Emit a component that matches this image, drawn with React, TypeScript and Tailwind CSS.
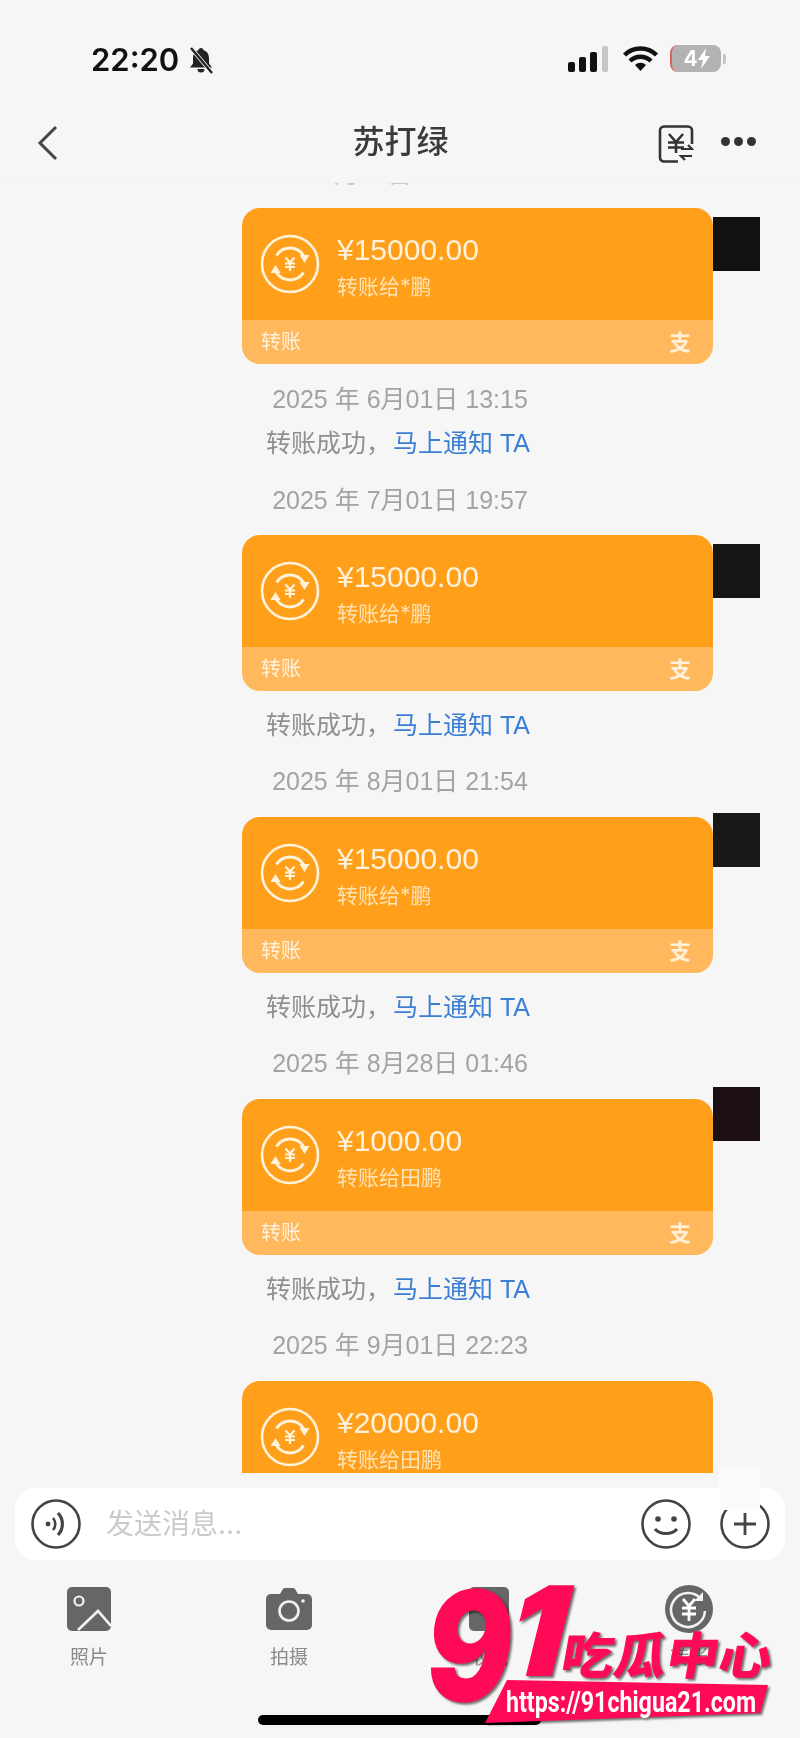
import React from "react";

const cjk = "font-['Inter','Noto_Sans_CJK_SC',sans-serif]";

function TransferGlyph() {
  return (
    <svg width="60" height="60" viewBox="0 0 60 60" fill="none" stroke="#fff3dc" className="shrink-0">
      <circle cx="30" cy="30" r="28" strokeWidth="2.6" />
      <path d="M16.500 21.500a16 16 0 0 1 27 0" strokeWidth="3" />
      <path d="M43.500 38.500a16 16 0 0 1-27 0" strokeWidth="3" />
      <path d="M39.500 21h10l-5 8z" fill="#fff3dc" strokeWidth="0" />
      <path d="M20.500 39h-10l5-8z" fill="#fff3dc" strokeWidth="0" />
      <path d="M25.500 23.500l4.500 5 4.500-5M25 29.500h10M25 33h10M30 29v8" strokeWidth="2.200" />
    </svg>
  );
}

function Card({ amount, to, square }: { amount: string; to: string; square?: string }) {
  return (
    <div className="relative ml-[242px] w-[471px] shrink-0">
      <div className="overflow-hidden rounded-[18px]">
        <div className="flex h-[112px] items-center gap-[17px] bg-[#ff9f1a] pl-[18px]">
          <TransferGlyph />
          <div className="flex flex-col pt-[6px]">
            <span className="font-['Liberation_Sans',sans-serif] text-[30px] leading-[34px] text-[#fff2dc]">{amount}</span>
            <span className={`${cjk} mt-[6px] text-[21px] leading-[28px] text-[#ffe2b4]`}>{to}</span>
          </div>
        </div>
        <div className="flex h-[44px] items-center justify-between bg-[#ffb85c] pl-[19px] pr-[22px]">
          <span className={`${cjk} text-[20px] text-[#fff1dc]`}>转账</span>
          <span className={`${cjk} text-[22px] font-semibold text-[#fff1dc]`}>支</span>
        </div>
      </div>
      {square && <div className={`absolute left-[471px] top-[9px] h-[54px] w-[47px] ${square}`} />}
    </div>
  );
}

function DateLine({ text, mt }: { text: string; mt: string }) {
  return (
    <div className={`${mt} flex h-[36px] shrink-0 items-center justify-center pt-[2px] font-['Liberation_Sans','Noto_Sans_CJK_SC',sans-serif] text-[25px] text-[#a3a3a3]`}>
      {text}
    </div>
  );
}

function Success({ mt }: { mt: string }) {
  return (
    <div className={`${mt} flex h-[36px] shrink-0 items-center justify-center pr-[4px] pt-[2px] font-['Liberation_Sans','Noto_Sans_CJK_SC',sans-serif] text-[25px] text-[#8f8f8f]`}>
      <span className="mr-[2px]">转账成功，</span>
      <span className="text-[#3b7fd4]">马上通知 TA</span>
    </div>
  );
}

function Tool({ label, children }: { label: string; children: React.ReactNode }) {
  return (
    <div className="flex flex-col items-center">
      <div className="flex h-[50px] items-center justify-center">{children}</div>
      <span className={`${cjk} mt-[10px] text-[19px] leading-[28px] text-[#8a8a8a]`}>{label}</span>
    </div>
  );
}

function Logo() {
  return (
    <svg
      width="360"
      height="160"
      viewBox="0 0 360 160"
      className="absolute left-[425px] top-[1578px] drop-shadow-[2px_2px_1px_rgba(0,0,0,0.55)]"
    >
      <g transform="skewX(-6)">
        <text x="10" y="122" fontFamily="Inter" fontWeight="800" fontSize="150" fill="#ff0a57" stroke="#ff0a57" strokeWidth="2" textLength="86" lengthAdjust="spacingAndGlyphs">
          9
        </text>
      </g>
      <g transform="skewX(-14)">
        <text x="101" y="97" fontFamily="Inter" fontWeight="900" fontSize="122" fill="#ff0a57" stroke="#ff0a57" strokeWidth="2" textLength="55" lengthAdjust="spacingAndGlyphs">
          1
        </text>
      </g>
      <text
        x="0"
        y="0"
        transform="translate(134 96) skewX(-10)"
        fontFamily="Noto Sans CJK SC"
        fontWeight="900"
        fontSize="50"
        fill="#ff0a57"
        textLength="210"
        lengthAdjust="spacingAndGlyphs"
      >
        吃瓜中心
      </text>
      <polygon points="82,102 343,107 335,135 60,145" fill="#ff0a57" />
      <text x="81" y="134" fontFamily="Roboto" fontWeight="700" fontSize="29" fill="#ffffff" textLength="250" lengthAdjust="spacingAndGlyphs">
        https://91chigua21.com
      </text>
    </svg>
  );
}

export default function App() {
  return (
    <div className="relative flex h-[1738px] w-[800px] flex-col overflow-hidden bg-[#f6f6f6] blur-[0.5px]">
      {/* status bar */}
      <div className="flex h-[100px] shrink-0 items-start justify-between pl-[91px] pr-[74px] pt-[42px]">
        <div className="flex items-center gap-[9px]">
          <span className="font-['Inter',sans-serif] text-[31px] font-semibold leading-[36px] text-[#111]">22:20</span>
          <svg width="26" height="27" viewBox="0 0 26 27" fill="#222">
            <path d="M13 1c1.500 0 2.400 1 2.600 2.200C19.500 4.400 21 7.500 21 11.500v5l3 4H2l3-4v-5c0-4 1.500-7.100 5.400-8.300C10.600 2 11.500 1 13 1z" />
            <path d="M9.500 22h7a3.500 3.500 0 0 1-7 0z" />
            <path d="M3 1l21 25" stroke="#f6f6f6" strokeWidth="4" />
            <path d="M3 1l21 25" stroke="#222" strokeWidth="2.400" />
          </svg>
        </div>
        <div className="flex items-center pt-[3px]">
          <svg width="41" height="26" viewBox="0 0 41 26">
            <rect x="0" y="16" width="7" height="10" rx="2" fill="#111" />
            <rect x="11" y="11" width="7" height="15" rx="2" fill="#111" />
            <rect x="22" y="6" width="7" height="20" rx="2" fill="#111" />
            <rect x="34" y="0" width="6" height="26" rx="2" fill="#c6c6c6" />
          </svg>
          <svg width="37" height="26" viewBox="0 0 37 26" fill="none" stroke="#111" strokeWidth="4.500" className="ml-[13px]">
            <path d="M2.500 9a23 23 0 0 1 32 0" />
            <path d="M8 15a15 15 0 0 1 21 0" />
            <path d="M18.500 25l-5.500-6a8 8 0 0 1 11 0z" fill="#111" stroke="none" />
          </svg>
          <div className="ml-[11px] flex items-center gap-[2px]">
            <div className="flex h-[27px] w-[51px] items-center justify-center rounded-[8px] border-l-[2px] border-l-[#e0605a] bg-[#b3b3b3] font-['Inter',sans-serif] text-[21px] font-bold text-white">
              4
              <svg width="12" height="21" viewBox="0 0 12 21" fill="#fff">
                <path d="M8 0L0 12h5l-2 9 9-13H7z" />
              </svg>
            </div>
            <div className="h-[10px] w-[3px] rounded-r-[2px] bg-[#c4c4c4]" />
          </div>
        </div>
      </div>

      {/* nav */}
      <div className="relative flex h-[83px] shrink-0 items-start justify-between border-b border-[#f1f1f1] pl-[36px] pr-[44px] pt-[25px]">
        <svg width="24" height="36" viewBox="0 0 24 36" fill="none" stroke="#444" strokeWidth="3">
          <path d="M20 2L4 18l16 16" />
        </svg>
        <span className={`${cjk} absolute left-[1px] right-0 top-[20px] text-center text-[32px] font-medium leading-[44px] text-[#3a3a3a]`}>苏打绿</span>
        <div className="flex items-start gap-[27px]">
          <svg width="36" height="38" viewBox="0 0 36 38" fill="none" stroke="#333" strokeWidth="2.600">
            <path d="M20 36.500H6a4 4 0 0 1-4-4V5.500a4 4 0 0 1 4-4h24a4 4 0 0 1 4 4V19" />
            <path d="M11 9l7 8 7-8M10 17.500h16M10 22.500h16M18 17v11" />
            <path d="M23 24h11l-4-4M34 31H23l4 4" strokeWidth="2.200" />
          </svg>
          <div className="flex gap-[4px] pt-[12px]">
            <div className="h-[9px] w-[9px] rounded-full bg-[#333]" />
            <div className="h-[9px] w-[9px] rounded-full bg-[#333]" />
            <div className="h-[9px] w-[9px] rounded-full bg-[#333]" />
          </div>
        </div>
      </div>

      {/* messages */}
      <div className="flex min-h-0 flex-1 flex-col overflow-hidden">
        <div className="flex h-[2px] shrink-0 items-end justify-center overflow-hidden font-['Liberation_Sans','Noto_Sans_CJK_SC',sans-serif] text-[25px] leading-[22px] text-[#c8c8c8]">
          5月01日 11:23
        </div>
        <div className="mt-[23px]">
          <Card amount="¥15000.00" to="转账给*鹏" square="bg-[#111111]" />
        </div>
        <DateLine text="2025 年 6月01日 13:15" mt="mt-[17px]" />
        <Success mt="mt-[8px]" />
        <DateLine text="2025 年 7月01日 19:57" mt="mt-[21px]" />
        <div className="mt-[17px]">
          <Card amount="¥15000.00" to="转账给*鹏" square="bg-[#161616]" />
        </div>
        <Success mt="mt-[16px]" />
        <DateLine text="2025 年 8月01日 21:54" mt="mt-[20px]" />
        <div className="mt-[18px]">
          <Card amount="¥15000.00" to="转账给*鹏" square="bg-[#181818] -translate-y-[13px]" />
        </div>
        <Success mt="mt-[16px]" />
        <DateLine text="2025 年 8月28日 01:46" mt="mt-[20px]" />
        <div className="mt-[18px]">
          <Card amount="¥1000.00" to="转账给田鹏" square="bg-[#1c1016] -translate-y-[21px]" />
        </div>
        <Success mt="mt-[16px]" />
        <DateLine text="2025 年 9月01日 22:23" mt="mt-[20px]" />
        <div className="mt-[18px]">
          <Card amount="¥20000.00" to="转账给田鹏" />
        </div>
      </div>

      {/* composer */}
      <div className="relative h-[265px] shrink-0 pt-[15px]">
        <div className="mx-[15px] flex h-[72px] items-center rounded-[20px] bg-white pl-[16px] pr-[15px]">
          <svg width="50" height="50" viewBox="0 0 50 50" fill="none" stroke="#444" strokeWidth="2.600" className="shrink-0">
            <circle cx="25" cy="25" r="23.500" />
            <circle cx="17" cy="25" r="2.400" fill="#444" stroke="none" />
            <path d="M22 19a9 9 0 0 1 0 12" />
            <path d="M27 14a16 16 0 0 1 0 22" strokeWidth="3.200" />
          </svg>
          <span className={`${cjk} ml-[25px] flex-1 text-[28px] text-[#cbcbcb]`}>发送消息...</span>
          <svg width="50" height="50" viewBox="0 0 50 50" fill="none" stroke="#444" strokeWidth="2.600" className="shrink-0">
            <circle cx="25" cy="25" r="23.500" />
            <circle cx="17" cy="20" r="2.800" fill="#444" stroke="none" />
            <circle cx="33" cy="20" r="2.800" fill="#444" stroke="none" />
            <path d="M14 30c5 6 17 6 22 0" strokeWidth="3" />
          </svg>
          <svg width="50" height="50" viewBox="0 0 50 50" fill="none" stroke="#444" strokeWidth="2.600" className="ml-[29px] shrink-0">
            <circle cx="25" cy="25" r="23.500" />
            <path d="M14 25h22M25 14v22" strokeWidth="2.800" />
          </svg>
        </div>
        <div className="absolute left-[719px] top-[-6px] h-[43px] w-[41px] bg-[#fbfbfb]" />

        <div className="-ml-[11px] mt-[24px] grid grid-cols-[repeat(4,200px)]">
          <Tool label="照片">
            <svg width="44" height="44" viewBox="0 0 44 44">
              <rect x="0" y="0" width="44" height="44" rx="5" fill="#666" />
              <circle cx="12" cy="14" r="4.500" fill="none" stroke="#f2f2f2" strokeWidth="2.200" />
              <path d="M11 43L31 24l13 15" fill="none" stroke="#f2f2f2" strokeWidth="2.600" />
            </svg>
          </Tool>
          <Tool label="拍摄">
            <svg width="46" height="44" viewBox="0 0 46 44">
              <path d="M5 7h9l3-5a3 3 0 0 1 2-1h8a3 3 0 0 1 2 1l3 5h9a5 5 0 0 1 5 5v26a5 5 0 0 1-5 5H5a5 5 0 0 1-5-5V12a5 5 0 0 1 5-5z" fill="#666" />
              <circle cx="23" cy="24" r="9.500" fill="none" stroke="#f2f2f2" strokeWidth="2.600" />
              <circle cx="37" cy="14" r="1.800" fill="#f2f2f2" />
            </svg>
          </Tool>
          <Tool label="收藏">
            <svg width="40" height="44" viewBox="0 0 40 44">
              <rect x="0" y="0" width="40" height="44" rx="5" fill="#666" />
            </svg>
          </Tool>
          <Tool label="转账">
            <svg width="48" height="48" viewBox="0 0 48 48" fill="none">
              <circle cx="24" cy="24" r="24" fill="#666" />
              <path d="M36 14a17 17 0 1 0 4 12" stroke="#f2f2f2" strokeWidth="2.600" />
              <path d="M38 7v9h-9z" fill="#f2f2f2" />
              <path d="M18 14l6 7 6-7M17 23h14M17 29h14M24 21v15" stroke="#fff" strokeWidth="2.800" />
            </svg>
          </Tool>
        </div>
        <div className="absolute bottom-[13px] left-[258px] h-[10px] w-[283px] rounded-full bg-black" />
      </div>

      <Logo />
    </div>
  );
}
